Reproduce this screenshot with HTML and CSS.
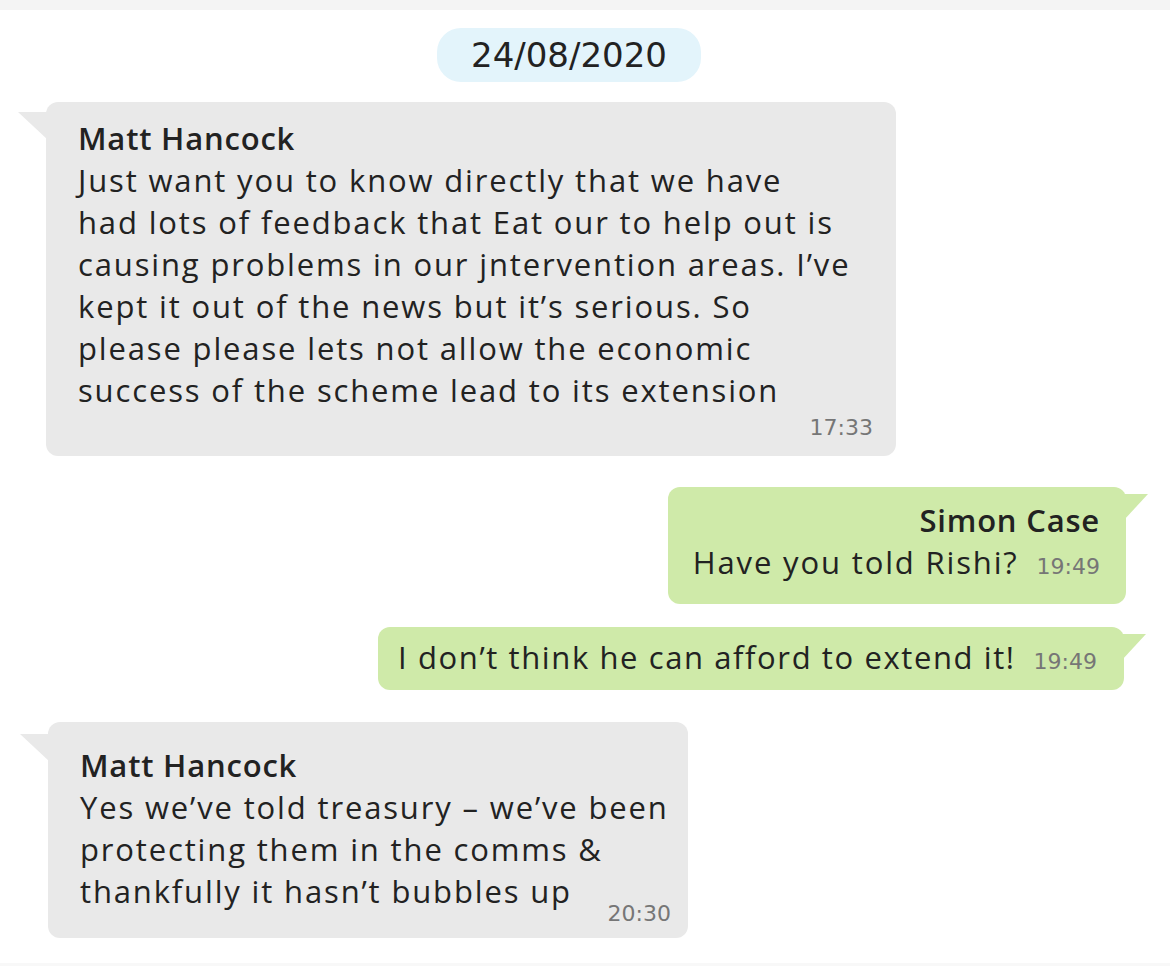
FILE: index.html
```html
<!DOCTYPE html>
<html lang="en">
<head>
<meta charset="utf-8">
<title>Chat</title>
<link rel="stylesheet" href="styles.css">
</head>
<body>
<div class="topbar"></div>
<main class="chat">
  <div class="date-row"><span class="date-pill">24/08/2020</span></div>

  <div class="bubble in m1">
    <div class="name">Matt Hancock</div>
    <div class="text">Just want you to know directly that we have<br>had lots of feedback that Eat our to help out is<br>causing problems in our jntervention areas. I’ve<br>kept it out of the news but it’s serious. So<br>please please lets not allow the economic<br>success of the scheme lead to its extension</div>
    <div class="time-line"><span class="time">17:33</span></div>
  </div>

  <div class="bubble out m2">
    <div class="name">Simon Case</div>
    <div class="text">Have you told Rishi?<span class="time inline">19:49</span></div>
  </div>

  <div class="bubble out m3">
    <div class="text">I don’t think he can afford to extend it!<span class="time inline">19:49</span></div>
  </div>

  <div class="bubble in m4">
    <div class="name">Matt Hancock</div>
    <div class="text">Yes we’ve told treasury – we’ve been<br>protecting them in the comms &amp;<br>thankfully it hasn’t bubbles up<span class="time float">20:30</span></div>
  </div>
</main>
<div class="bottombar"></div>
</body>
</html>
```

FILE: styles.css
```css
* { box-sizing: border-box; }

html, body {
  margin: 0;
  padding: 0;
  background: #ffffff;
}

body {
  width: 1170px;
  height: 966px;
  overflow: hidden;
  font-family: "Open Sans", "Noto Sans", sans-serif;
  color: #222222;
  display: flex;
  flex-direction: column;
}

.topbar {
  height: 10px;
  background: #f4f4f4;
  flex: none;
}

.bottombar {
  margin-top: auto;
  height: 3px;
  background: #f8f8f8;
  flex: none;
}

.chat {
  display: flex;
  flex-direction: column;
  padding: 0 44px 0 46px;
}

.date-row {
  display: flex;
  justify-content: center;
  padding-right: 34px;
  margin-top: 18px;
}

.date-pill {
  display: block;
  width: 264px;
  height: 54px;
  line-height: 54px;
  text-align: center;
  background: #e3f4fb;
  border-radius: 24px;
  font-family: "DejaVu Sans", sans-serif;
  font-size: 34px;
  color: #222222;
}

.bubble {
  position: relative;
  display: flow-root;
  border-radius: 12px;
  font-size: 31px;
  line-height: 42px;
  letter-spacing: 1.85px;
  white-space: nowrap;
}

.bubble.in {
  align-self: flex-start;
  background: #e9e9e9;
}

.bubble.out {
  align-self: flex-end;
  background: #cfeaa9;
  text-align: right;
}

.bubble::before {
  content: "";
  position: absolute;
  top: 10px;
  width: 30px;
  height: 28px;
}

.bubble.in::before {
  left: -28px;
  background: #e9e9e9;
  clip-path: polygon(0 0, 100% 0, 100% 100%);
}

.bubble.out::before {
  right: -22px;
  top: 7px;
  width: 24px;
  height: 26px;
  background: #cfeaa9;
  clip-path: polygon(0 0, 100% 0, 0 100%);
}

.name {
  font-weight: 600;
  letter-spacing: 0.8px;
}

.time {
  font-family: "DejaVu Sans", sans-serif;
  font-size: 22px;
  letter-spacing: 0;
  color: #767676;
}

.time-line {
  text-align: right;
  font-family: "DejaVu Sans", sans-serif;
  font-size: 22px;
  line-height: 28px;
  height: 31px;
  padding-top: 3px;
}

.time.inline {
  line-height: 1;
  margin-left: 18px;
}

.time.float {
  float: right;
  line-height: 28px;
  margin-top: 30px;
}

.m1 {
  width: 850px;
  margin-top: 20px;
  padding: 15px 23px 14px 32px;
}

.m2 {
  width: 458px;
  margin-top: 31px;
  padding: 12px 26px 21px 22px;
}

.m3 {
  width: 746px;
  margin-top: 23px;
  margin-right: 2px;
  padding: 9px 27px 12px 14px;
  letter-spacing: 1.6px;
}

.m4 {
  width: 640px;
  margin-top: 32px;
  margin-left: 2px;
  padding: 22px 17px 10px 32px;
}

.m4::before { top: 12px; }
```
